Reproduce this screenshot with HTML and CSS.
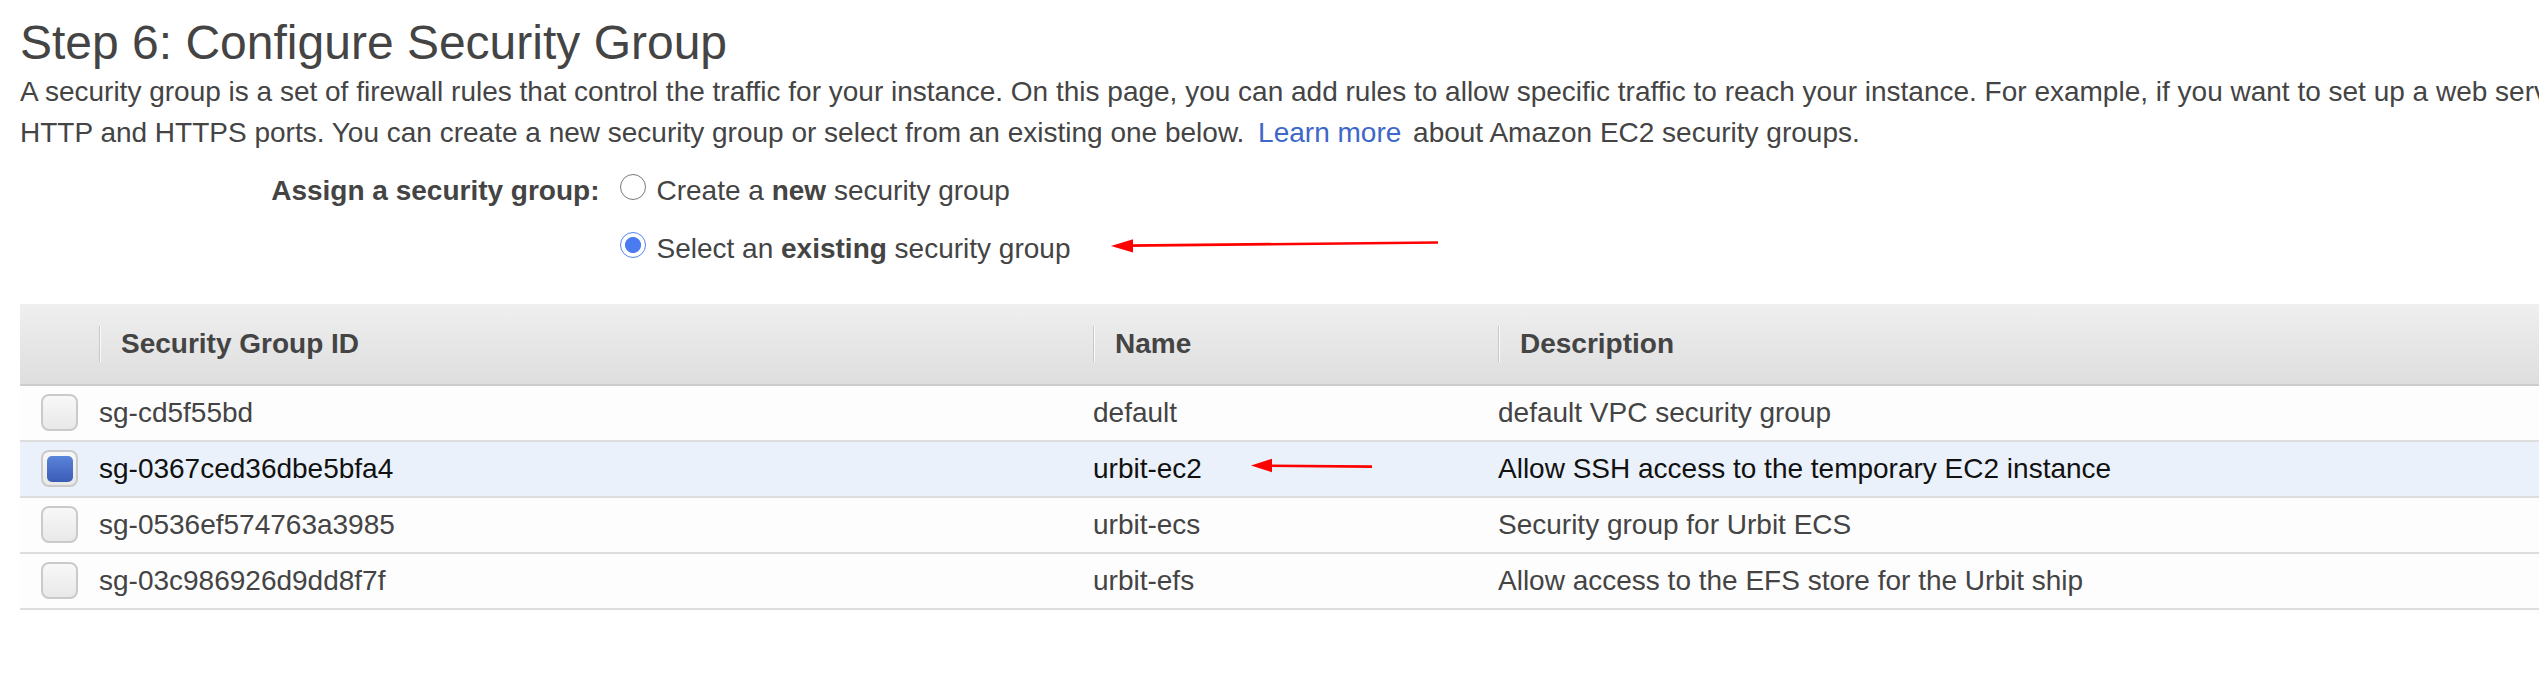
FILE: index.html
```html
<!DOCTYPE html>
<html lang="en">
<head>
<meta charset="utf-8">
<title>Step 6: Configure Security Group</title>
<link rel="stylesheet" href="styles.css">
</head>
<body>
<div class="page">
  <h1 class="title">Step 6: Configure Security Group</h1>
  <p class="intro">A security group is a set of firewall rules that control the traffic for your instance. On this page, you can add rules to allow specific traffic to reach your instance. For example, if you want to set up a web server and allow Internet traffic to reach your instance, add rules that allow unrestricted access to the<br>HTTP and HTTPS ports. You can create a new security group or select from an existing one below. <a class="link" href="#">Learn more</a> about Amazon EC2 security groups.</p>

  <div class="assign">
    <div class="assign-label">Assign a security group:</div>
    <div class="assign-options">
      <div class="option"><span class="radio"></span>Create a <b>new</b> security group</div>
      <div class="option"><span class="radio radio-on"></span>Select an <b>existing</b> security group</div>
    </div>
  </div>

  <div class="sg-table">
    <div class="row head">
      <div class="cell"></div>
      <div class="cell hcell">Security Group ID</div>
      <div class="cell hcell">Name</div>
      <div class="cell hcell">Description</div>
    </div>
    <div class="row">
      <div class="cell check-cell"><span class="check"></span></div>
      <div class="cell">sg-cd5f55bd</div>
      <div class="cell">default</div>
      <div class="cell">default VPC security group</div>
    </div>
    <div class="row selected">
      <div class="cell check-cell"><span class="check check-on"><span class="check-fill"></span></span></div>
      <div class="cell">sg-0367ced36dbe5bfa4</div>
      <div class="cell">urbit-ec2</div>
      <div class="cell">Allow SSH access to the temporary EC2 instance</div>
    </div>
    <div class="row">
      <div class="cell check-cell"><span class="check"></span></div>
      <div class="cell">sg-0536ef574763a3985</div>
      <div class="cell">urbit-ecs</div>
      <div class="cell">Security group for Urbit ECS</div>
    </div>
    <div class="row">
      <div class="cell check-cell"><span class="check"></span></div>
      <div class="cell">sg-03c986926d9dd8f7f</div>
      <div class="cell">urbit-efs</div>
      <div class="cell">Allow access to the EFS store for the Urbit ship</div>
    </div>
  </div>
</div>

<svg class="annotations" width="2539" height="691" viewBox="0 0 2539 691" aria-hidden="true">
  <line x1="1438" y1="242.5" x2="1128" y2="245.6" stroke="#f00" stroke-width="2.6"/>
  <polygon points="1111,246 1133,239.2 1133,252.6" fill="#f00"/>
  <line x1="1372" y1="466.6" x2="1266" y2="465.7" stroke="#f00" stroke-width="2.6"/>
  <polygon points="1251,465.5 1272,458.8 1272,472.3" fill="#f00"/>
</svg>
</body>
</html>
```

FILE: styles.css
```css
html, body {
  margin: 0;
  padding: 0;
  overflow: hidden;
  background: #fff;
}

body {
  font-family: "Liberation Sans", Arial, sans-serif;
  color: #444;
  font-size: 28px;
}

.page {
  padding: 13.5px 0 0 20px;
}

.title {
  margin: 0;
  font-size: 48px;
  line-height: 57px;
  font-weight: normal;
  color: #444;
  white-space: nowrap;
}

.intro {
  margin: 0;
  font-size: 28px;
  line-height: 41px;
  white-space: nowrap;
}

.link {
  color: #3d67c9;
  text-decoration: none;
  margin: 0 4px 0 6px;
}

.assign {
  display: flex;
  padding-top: 9px;
}

.assign-label {
  box-sizing: border-box;
  width: 591px;
  padding-right: 11.5px;
  text-align: right;
  font-weight: bold;
  line-height: 58px;
  white-space: nowrap;
}

.assign-options {
  display: flex;
  flex-direction: column;
}

.option {
  line-height: 58px;
  white-space: nowrap;
}

.radio {
  display: inline-block;
  box-sizing: border-box;
  width: 26px;
  height: 26px;
  margin: 0 10.5px 0 9px;
  border: 1.5px solid #7a7a7a;
  border-radius: 50%;
  background: #fff;
  vertical-align: baseline;
}

.radio-on {
  border: 1.5px solid #5585ef;
  background: radial-gradient(circle, #4a7bf0 0, #4a7bf0 7.6px, #fff 8.4px);
}

.sg-table {
  margin-top: 26px;
}

.row {
  display: grid;
  grid-template-columns: 79px 994px 405px 1fr;
  height: 56px;
  box-sizing: border-box;
  border-bottom: 2px solid #dddddd;
  background: #fdfdfd;
  white-space: nowrap;
}

.row.head {
  height: 82px;
  border-bottom: 2px solid #cccccc;
  background: linear-gradient(#efefef, #dedede);
  font-weight: bold;
  color: #444;
}

.row.selected {
  background: #eaf1fb;
  color: #111;
}

.cell {
  display: flex;
  align-items: center;
  overflow: hidden;
}

.hcell {
  position: relative;
  padding-left: 22px;
}

.hcell::before {
  content: "";
  position: absolute;
  left: 0;
  top: 22px;
  width: 1px;
  height: 36px;
  background: #c8c8c8;
  box-shadow: 1px 0 0 #fafafa;
}

.check-cell {
  justify-content: center;
}

.check {
  box-sizing: border-box;
  width: 37px;
  height: 37px;
  border: 2px solid #cacaca;
  border-radius: 8px;
  background: linear-gradient(#f8f8f8, #e8e8e8);
  display: flex;
  align-items: center;
  justify-content: center;
}

.check-fill {
  width: 26px;
  height: 26px;
  border-radius: 5px;
  background: linear-gradient(#5b84db, #3a5cb6);
}

.annotations {
  position: absolute;
  top: 0;
  left: 0;
  pointer-events: none;
}
```
